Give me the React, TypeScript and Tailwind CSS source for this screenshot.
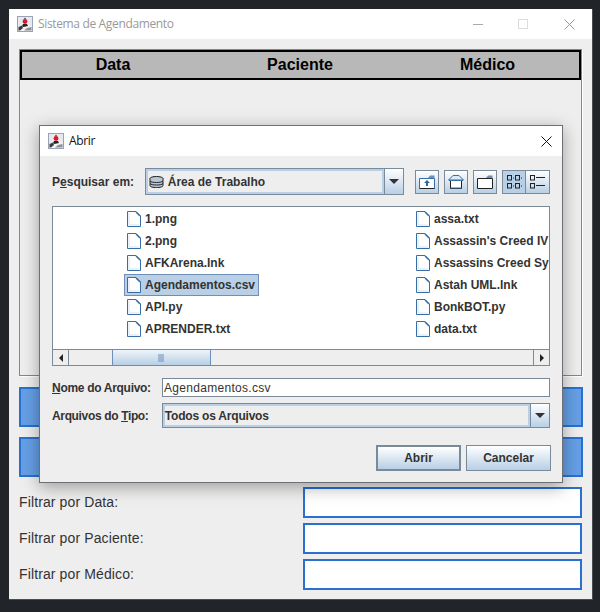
const FONT = "font-['Liberation_Sans',Arial,sans-serif]";

function JavaIcon() {
  return (
    <svg width="16" height="16" viewBox="0 0 16 16" className="shrink-0">
      <rect x="0.5" y="0.5" width="15" height="15" fill="#e6eaef" stroke="#98a4b4" />
      <path d="M8 3 L12 9 L14 11 L14 15 L2 15 L2 11 L4 9 Z" fill="#f4f4f4" />
      <path d="M6 8 L10 8 L11 10 L6.5 11 L5 10 Z" fill="#26262a" />
      <path d="M1.5 11 L5 9.5 L6 12 L3 14.5 L1.5 14.5 Z" fill="#3c3e44" />
      <path d="M10 12 L14.5 11 L14.5 14.5 L7 14.5 Z" fill="#8e9298" />
      <path d="M8 1.5 L9 3 L7 3 Z" fill="#30323a" />
      <circle cx="8" cy="5.5" r="2.4" fill="#e2162b" />
    </svg>
  );
}

function FileIcon() {
  return (
    <svg width="14" height="16" viewBox="0 0 14 16" className="shrink-0">
      <path d="M1 0.5 H9 L13.5 5 V15.5 H0.5 V0.5 Z" fill="#fff" stroke="#376ea6" strokeWidth="1" />
      <path d="M2 2 V14 H12" fill="none" stroke="#d5e2f0" />
      <path d="M9 1 L13 5" fill="none" stroke="#376ea6" strokeWidth="1.4" />
    </svg>
  );
}

function DropArrow() {
  return (
    <button className="flex w-[19px] shrink-0 items-center justify-center border-l border-[#7a8a99] bg-gradient-to-b from-white to-[#b8cfe5]">
      <svg width="10" height="5" viewBox="0 0 10 5">
        <path d="M0 0 H10 L5 5 Z" fill="#333" />
      </svg>
    </button>
  );
}

function ToolButton({ children, active, className }: { children: React.ReactNode; active?: boolean; className?: string }) {
  return (
    <button className={"flex h-6 w-6 items-center justify-center border border-[#7a8a99] " + (active ? "bg-[#b8cfe5] " : "bg-gradient-to-b from-white to-[#b8cfe5] ") + (className ?? "")}>
      {children}
    </button>
  );
}

function FileRow({ name, selected }: { name: string; selected?: boolean }) {
  return (
    <div className="flex h-[22px] items-center">
      <div className={"flex h-[22px] items-center gap-1 pl-[2px] pr-[3px] " + (selected ? "border border-[#6d8fb8] bg-[#b8cfe5] -ml-px" : "")}>
        <FileIcon />
        <span className="whitespace-nowrap text-[12px] font-bold text-[#333]">{name}</span>
      </div>
    </div>
  );
}

function Filter({ label }: { label: string }) {
  return (
    <div className="flex h-[31px] items-center justify-between">
      <span className="text-[14px] tracking-[0.12px] text-[#333]">{label}</span>
      <input className="h-[31px] w-[279px] border-2 border-[#2a70d0] bg-white outline-none" />
    </div>
  );
}

function Dialog() {
  const col1 = ["1.png", "2.png", "AFKArena.lnk", "Agendamentos.csv", "API.py", "APRENDER.txt"];
  const col2 = ["assa.txt", "Assassin's Creed IV", "Assassins Creed Sy", "Astah UML.lnk", "BonkBOT.py", "data.txt"];
  return (
    <div className="absolute left-[39px] top-[125px] h-[358px] w-[524px] border border-[#6c7075] bg-[#eeeeee] shadow-[0_4px_16px_rgba(0,0,0,0.35)]">
      <div className="flex h-[30px] items-center bg-white pl-[8px] pr-[10px]">
        <JavaIcon />
        <span className="ml-[5px] font-['Open_Sans',sans-serif] text-[12px] tracking-[-0.35px] text-[#111]">Abrir</span>
        <svg width="11" height="11" viewBox="0 0 11 11" className="ml-auto">
          <path d="M0.5 0.5 L10.5 10.5 M10.5 0.5 L0.5 10.5" stroke="#111" strokeWidth="1" />
        </svg>
      </div>

      <div className="flex flex-col px-[12px] pt-[12px]">
        <div className="flex h-[27px] items-center">
          <span className="w-[93px] text-[12px] font-bold text-[#333]">
            P<span className="underline">e</span>squisar em:
          </span>
          <div className="flex h-[27px] w-[260px] border border-[#7a8a99] bg-[#eeeeee]">
            <div className="flex flex-1 items-center gap-[5px] border-2 border-[#b8cfe5] pl-[1px]">
              <svg width="15" height="12" viewBox="0 0 15 12">
                <ellipse cx="7.5" cy="2.5" rx="6.5" ry="2" fill="#b9c6d4" stroke="#222" />
                <path d="M1 2.5 V9.5 C1 11 4 11.5 7.5 11.5 C11 11.5 14 11 14 9.5 V2.5 M1 5 C2 7 13 7 14 5 M1 7.5 C2 9.5 13 9.5 14 7.5" fill="#b9c6d4" stroke="#222" />
              </svg>
              <span className="-ml-px text-[12px] font-bold text-[#333]">Área de Trabalho</span>
            </div>
            <DropArrow />
          </div>
          <div className="ml-[11px] flex gap-[5px]">
            <ToolButton>
              <svg width="16" height="14" viewBox="0 0 16 14">
                <path d="M0.5 3.5 H15.5 V13.5 H0.5 Z" fill="#fff" stroke="#376ea6" />
                <path d="M9 3 L11 0.5 H15.5 V3 Z" fill="#6d8fb8" />
                <path d="M8 5 L5 8 H7 V11 H9 V8 H11 Z" fill="#2f6496" />
                <path d="M0.5 13.5 H15.5" stroke="#222" />
              </svg>
            </ToolButton>
            <ToolButton>
              <svg width="16" height="15" viewBox="0 0 16 15">
                <path d="M0.5 6 L5 1.5 H11 L15.5 6 Z" fill="#dfe9f3" stroke="#376ea6" />
                <path d="M2.5 6 V14.5 H13.5 V6" fill="#fff" stroke="#222" />
                <path d="M1 6.5 H15 M3 14 H13" stroke="#376ea6" />
              </svg>
            </ToolButton>
            <ToolButton>
              <svg width="16" height="14" viewBox="0 0 16 14">
                <path d="M0.5 3.5 H15.5 V13.5 H0.5 Z" fill="#fff" stroke="#222" />
                <path d="M9 3 L11 0.5 H15.5 V3 Z" fill="#6d8fb8" />
              </svg>
            </ToolButton>
            <div className="flex">
              <ToolButton active>
                <svg width="15" height="14" viewBox="0 0 15 14" fill="none" stroke="#222">
                  <rect x="0.5" y="0.5" width="4" height="4.5" />
                  <rect x="8.5" y="0.5" width="4" height="4.5" />
                  <rect x="0.5" y="8.5" width="4" height="4.5" />
                  <rect x="8.5" y="8.5" width="4" height="4.5" />
                  <path d="M6 3 H7 M14 3 H15 M6 11 H7 M14 11 H15" />
                </svg>
              </ToolButton>
              <ToolButton className="border-l-0">
                <svg width="15" height="14" viewBox="0 0 15 14" fill="none" stroke="#222">
                  <rect x="0.5" y="0.5" width="4" height="4.5" />
                  <rect x="0.5" y="8.5" width="4" height="4.5" />
                  <path d="M6 2.5 H15 M6 10.5 H15" />
                </svg>
              </ToolButton>
            </div>
          </div>
        </div>

        <div className="mt-[11px] flex h-[160px] w-[498px] flex-col border border-[#7a8a99] bg-white">
          <div className="flex flex-1 overflow-hidden pl-[72px] pt-[1px]">
            <div className="flex w-[289px] shrink-0 flex-col">
              {col1.map((n) => (
                <FileRow key={n} name={n} selected={n === "Agendamentos.csv"} />
              ))}
            </div>
            <div className="flex flex-col">
              {col2.map((n) => (
                <FileRow key={n} name={n} />
              ))}
            </div>
          </div>
          <div className="flex h-[16px] shrink-0 items-stretch border-t border-[#7a8a99] bg-[#eeeeee]">
            <button className="flex w-4 items-center justify-center border-r border-[#7a8a99]">
              <svg width="4" height="8" viewBox="0 0 4 8"><path d="M4 0 V8 L0 4 Z" fill="#222" /></svg>
            </button>
            <div className="ml-[43px] flex w-[99px] items-center justify-center border-x border-[#6d8fb8] bg-gradient-to-b from-[#eef4fa] to-[#b8cfe5]">
              <svg width="7" height="8" viewBox="0 0 7 8" stroke="#6d8fb8"><path d="M1 0 V8 M3 0 V8 M5 0 V8" /></svg>
            </div>
            <button className="ml-auto flex w-4 items-center justify-center border-l border-[#7a8a99]">
              <svg width="4" height="8" viewBox="0 0 4 8"><path d="M0 0 V8 L4 4 Z" fill="#222" /></svg>
            </button>
          </div>
        </div>

        <div className="mt-[12px] flex h-[19px] items-center">
          <span className="w-[110px] text-[12px] font-bold tracking-[-0.3px] text-[#333]">
            <span className="underline">N</span>ome do Arquivo:
          </span>
          <input
            readOnly
            value="Agendamentos.csv"
            className="h-[19px] w-[388px] border border-[#7a8a99] bg-white pl-[1px] text-[12px] tracking-[0.3px] text-[#333] outline-none"
          />
        </div>

        <div className="mt-[6px] flex h-[25px] items-center">
          <span className="w-[110px] text-[12px] font-bold tracking-[-0.35px] text-[#333]">
            Arquivos do <span className="underline">T</span>ipo:
          </span>
          <div className="flex h-[25px] w-[389px] border border-[#7a8a99] bg-[#eeeeee]">
            <div className="flex flex-1 items-center border-2 border-[#b8cfe5]">
              <span className="text-[12px] font-bold tracking-[-0.2px] text-[#333]">Todos os Arquivos</span>
            </div>
            <DropArrow />
          </div>
        </div>

        <div className="mt-[17px] flex justify-end gap-[5px]">
          <button className="h-[26px] w-[85px] border-2 border-[#7a8a99] bg-gradient-to-b from-white to-[#b8cfe5] text-[12px] font-bold text-[#333]">
            Abrir
          </button>
          <button className="-mr-px h-[26px] w-[85px] border border-[#7a8a99] bg-gradient-to-b from-white to-[#b8cfe5] text-[12px] font-bold text-[#333]">
            Cancelar
          </button>
        </div>
      </div>
    </div>
  );
}

export default function App() {
  return (
    <div className={"relative h-[612px] w-[600px] overflow-hidden bg-[#212529] pb-[12px] pl-[9px] pr-[7px] pt-[9px] " + FONT}>
      <div className="flex h-[591px] flex-col border-r border-b border-[#4a4d52] bg-[#eeeeee]">
        <div className="flex h-[30px] shrink-0 items-center bg-white pl-[8px]">
          <JavaIcon />
          <span className="ml-[5px] font-['Open_Sans',sans-serif] text-[12px] tracking-[-0.35px] text-[#999]">Sistema de Agendamento</span>
          <div className="ml-auto flex items-center">
            <svg width="10" height="10" viewBox="0 0 10 10" className="mr-[35px]"><path d="M0 5.5 H10" stroke="#aaa" /></svg>
            <svg width="10" height="10" viewBox="0 0 10 10" className="mr-[36px]"><rect x="0.5" y="0.5" width="9" height="9" fill="none" stroke="#ddd" /></svg>
            <svg width="11" height="11" viewBox="0 0 11 11" className="mr-[17px]"><path d="M0.5 0.5 L10.5 10.5 M10.5 0.5 L0.5 10.5" stroke="#999" /></svg>
          </div>
        </div>

        <div className="flex flex-1 flex-col px-[10px] pt-[10px]">
          <div className="h-[327px] w-[563px] shrink-0 border border-[#7a8a99] shadow-[1px_1px_0_#fff]">
            <div className="grid h-[30px] grid-cols-[182px_192px_1fr] items-center border-2 border-black bg-[#b8b8b8] text-center text-[16px] font-bold text-black">
              <span>Data</span>
              <span>Paciente</span>
              <span>Médico</span>
            </div>
          </div>

          <div className="mt-[11px] h-10 w-[564px] shrink-0 border-2 border-[#2a70d0] bg-[#659fe6]" />
          <div className="mt-[10px] h-10 w-[564px] shrink-0 border-2 border-[#2a70d0] bg-[#659fe6]" />

          <div className="mt-[10px] flex w-[563px] flex-col gap-[5px]">
            <Filter label="Filtrar por Data:" />
            <Filter label="Filtrar por Paciente:" />
            <Filter label="Filtrar por Médico:" />
          </div>
        </div>
      </div>
      <Dialog />
    </div>
  );
}
